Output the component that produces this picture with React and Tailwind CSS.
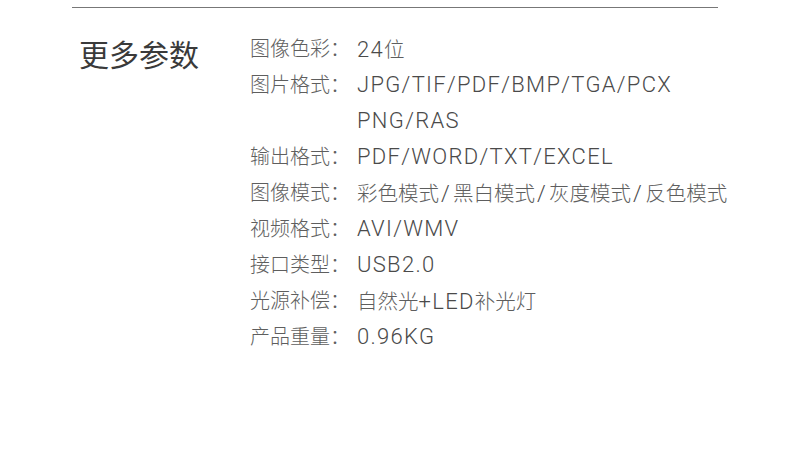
import React from "react";

const specs = [
  { label: "图像色彩：", value: ["24位"] },
  { label: "图片格式：", value: ["JPG/TIF/PDF/BMP/TGA/PCX", "PNG/RAS"] },
  { label: "输出格式：", value: ["PDF/WORD/TXT/EXCEL"] },
  { label: "图像模式：", value: ["彩色模式/黑白模式/灰度模式/反色模式"] },
  { label: "视频格式：", value: ["AVI/WMV"] },
  { label: "接口类型：", value: ["USB2.0"] },
  { label: "光源补偿：", value: ["自然光+LED补光灯"] },
  { label: "产品重量：", value: ["0.96KG"] },
];

// split a value into CJK / latin runs so the latin part can get its own wider face
function Mixed({ text }) {
  const parts = text.split(/([\u4e00-\u9fff]+)/).filter(Boolean);
  return (
    <div className="h-[36px] leading-[36px] whitespace-nowrap">
      {parts.map((p, i) =>
        /[\u4e00-\u9fff]/.test(p) ? (
          <span key={i} className="text-[20.5px] leading-[36px]">
            {p}
          </span>
        ) : (
          <span
            key={i}
            className={
              "font-['Roboto',sans-serif] font-light text-[22px] leading-[36px] tracking-[1.3px] text-[#4a4a4a]" +
              (p === "/" ? " px-[2px]" : "")
            }
          >
            {p}
          </span>
        )
      )}
    </div>
  );
}

export default function App() {
  return (
    <div
      className="w-[790px] h-[456px] bg-white overflow-hidden"
      style={{ fontFamily: '"Noto Sans CJK SC", "Noto Sans", sans-serif' }}
    >
      <div className="ml-[72px] mt-[7px] w-[646px] h-px bg-[#777]"></div>

      <div className="flex mt-[22px]">
        <h2 className="ml-[79px] w-[171px] text-[30px] leading-[46px] font-normal text-[#3a3a3a]">
          更多参数
        </h2>

        <div className="flex flex-col text-[20px] leading-[36px] font-light text-[#5e5e5e]">
          {specs.map((item) => (
            <div key={item.label} className="flex">
              <span className="w-[107px] shrink-0 h-[36px]">{item.label}</span>
              <div className="flex flex-col">
                {item.value.map((v) => (
                  <Mixed key={v} text={v} />
                ))}
              </div>
            </div>
          ))}
        </div>
      </div>
    </div>
  );
}
